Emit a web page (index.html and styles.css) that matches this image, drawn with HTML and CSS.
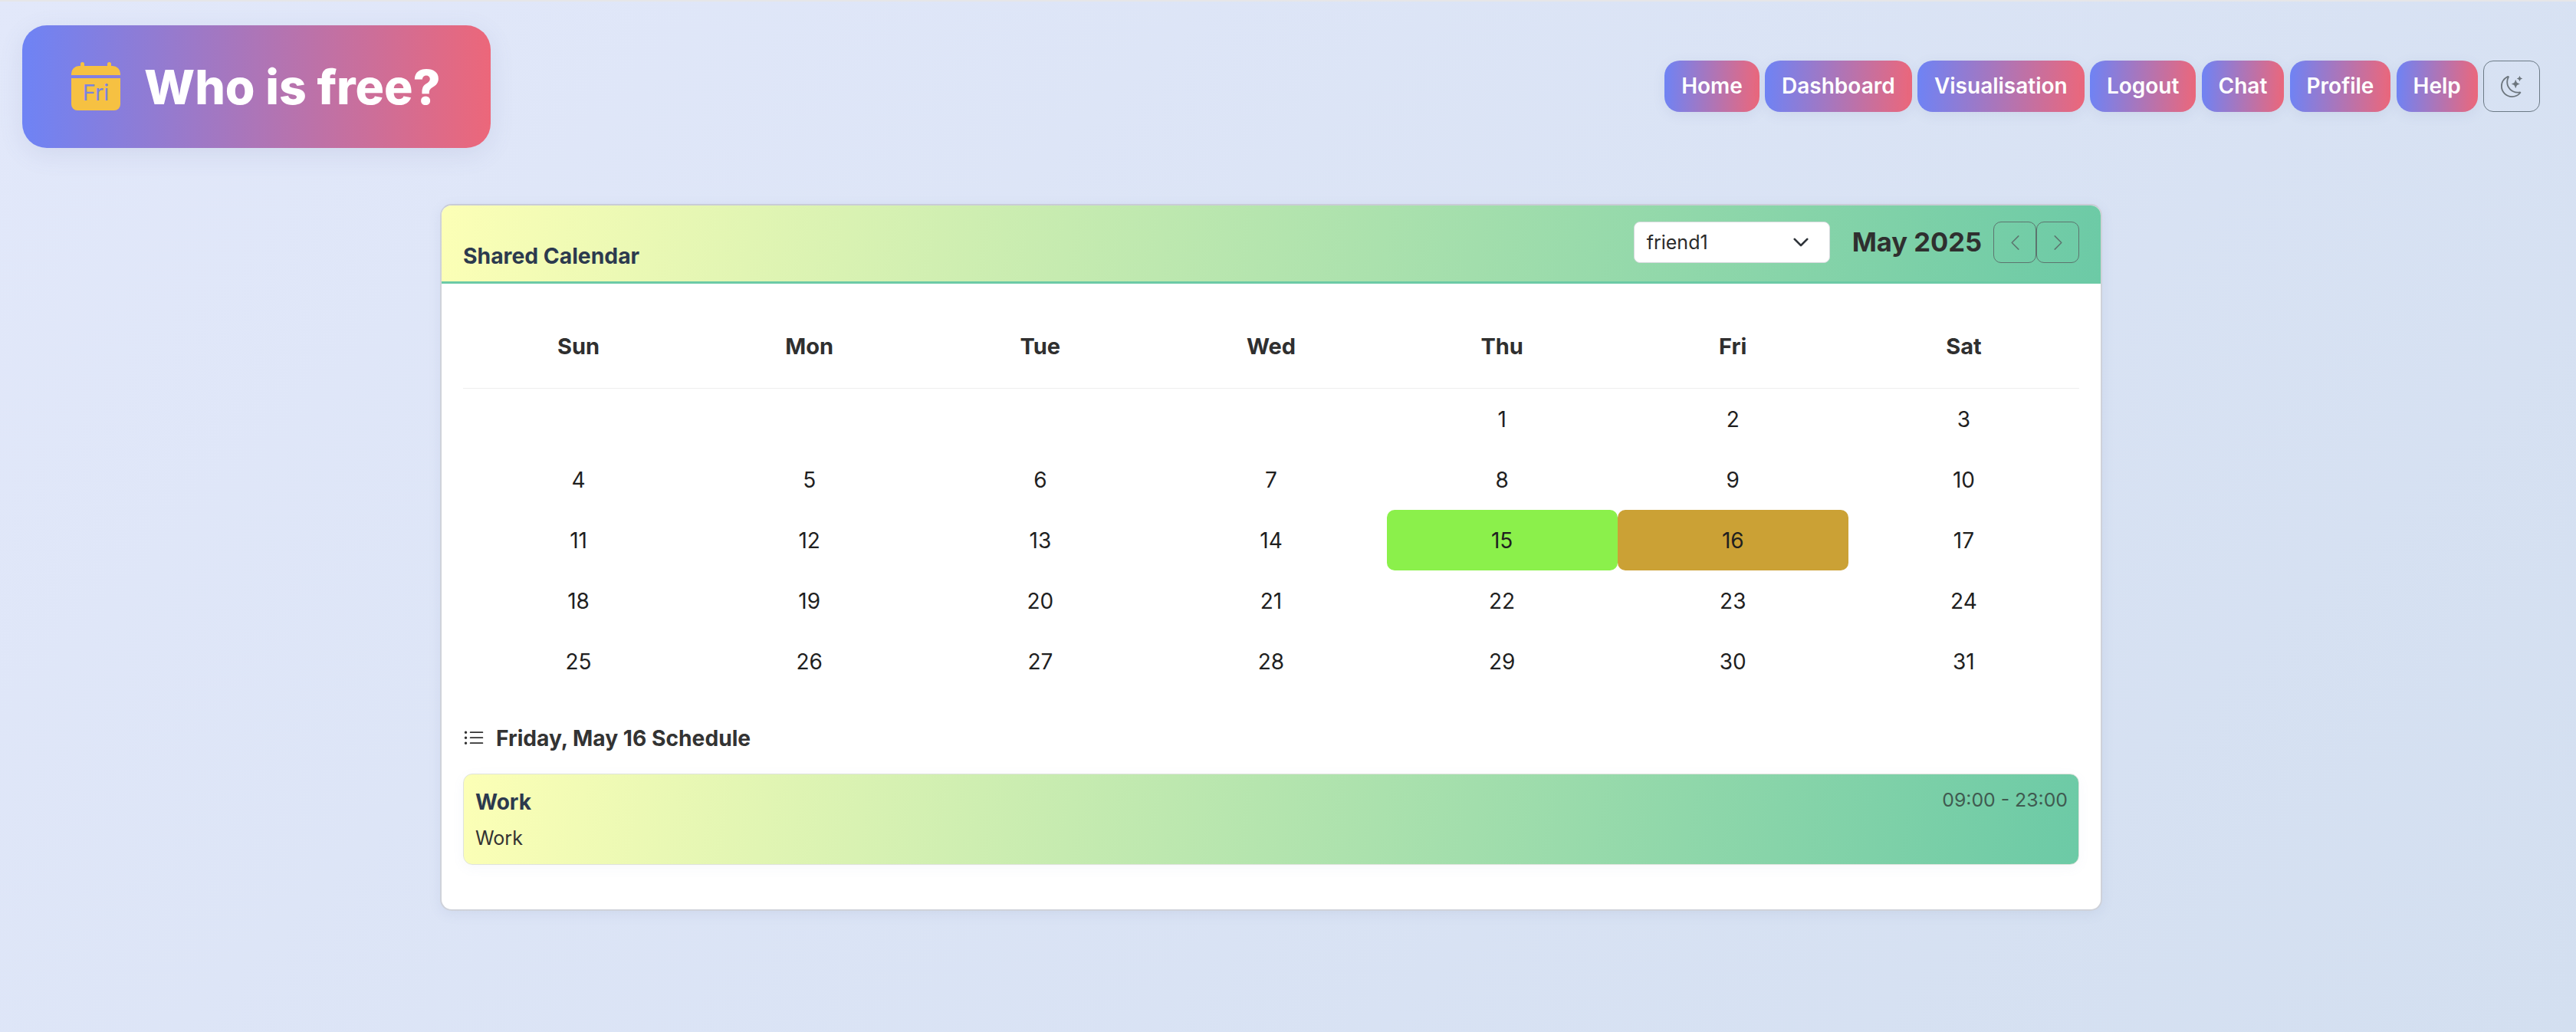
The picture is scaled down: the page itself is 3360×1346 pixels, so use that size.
FILE: index.html
```html
<!DOCTYPE html>
<html lang="en">
<head>
<meta charset="utf-8">
<title>Who is free?</title>
<link rel="stylesheet" href="styles.css">
</head>
<body>
<header class="topbar">
  <div class="logo">
    <svg class="logo-icon" viewBox="0 0 64 64" aria-hidden="true">
      <path class="cal" d="M12 5V2.500a2.500 2.500 0 0 1 5 0V5H47V2.500a2.500 2.500 0 0 1 5 0V5H54a10 10 0 0 1 10 10V17H0V15A10 10 0 0 1 10 5Z"/>
      <path class="cal" d="M0 21H64V55a8 8 0 0 1-8 8H8a8 8 0 0 1-8-8Z"/>
      <text class="cal-text" x="32" y="50" text-anchor="middle">Fri</text>
    </svg>
    <span class="logo-text">Who is free?</span>
  </div>
  <nav class="nav">
    <a class="nav-btn">Home</a>
    <a class="nav-btn">Dashboard</a>
    <a class="nav-btn">Visualisation</a>
    <a class="nav-btn">Logout</a>
    <a class="nav-btn">Chat</a>
    <a class="nav-btn">Profile</a>
    <a class="nav-btn">Help</a>
    <button class="theme-btn" aria-label="Toggle theme">
      <svg class="moon" viewBox="0 0 16 16" aria-hidden="true">
        <path d="M6 .278a.77.77 0 0 1 .08.858 7.2 7.2 0 0 0-.878 3.46c0 4.021 3.278 7.277 7.318 7.277q.792-.001 1.533-.16a.79.79 0 0 1 .81.316.73.73 0 0 1-.031.893A8.35 8.35 0 0 1 8.344 16C3.734 16 0 12.286 0 7.71 0 4.266 2.114 1.312 5.124.06A.75.75 0 0 1 6 .278M4.858 1.311A7.27 7.27 0 0 0 1.025 7.71c0 4.02 3.279 7.276 7.319 7.276a7.32 7.32 0 0 0 5.205-2.162q-.506.063-1.029.063c-4.61 0-8.343-3.714-8.343-8.29 0-1.167.242-2.278.681-3.286"/>
        <path d="M10.794 3.148a.217.217 0 0 1 .412 0l.387 1.162c.173.518.579.924 1.097 1.097l1.162.387a.217.217 0 0 1 0 .412l-1.162.387a1.73 1.73 0 0 0-1.097 1.097l-.387 1.162a.217.217 0 0 1-.412 0l-.387-1.162A1.73 1.73 0 0 0 9.31 6.593l-1.162-.387a.217.217 0 0 1 0-.412l1.162-.387a1.73 1.73 0 0 0 1.097-1.097zM13.863.099a.145.145 0 0 1 .274 0l.258.774c.115.346.386.617.732.732l.774.258a.145.145 0 0 1 0 .274l-.774.258a1.16 1.16 0 0 0-.732.732l-.258.774a.145.145 0 0 1-.274 0l-.258-.774a1.16 1.16 0 0 0-.732-.732l-.774-.258a.145.145 0 0 1 0-.274l.774-.258c.346-.115.617-.386.732-.732z"/>
      </svg>
    </button>
  </nav>
</header>

<main class="card">
  <div class="card-head">
    <h2 class="card-title">Shared Calendar</h2>
    <div class="card-tools">
      <div class="select">
        <span>friend1</span>
        <svg class="select-chevron" viewBox="0 0 16 16" aria-hidden="true"><path d="M2 5l6 6 6-6"/></svg>
      </div>
      <div class="month">May 2025</div>
      <div class="pager">
        <button class="page-btn" aria-label="Previous month"><svg class="chev" viewBox="0 0 16 16" aria-hidden="true"><path fill-rule="evenodd" d="M11.354 1.646a.5.5 0 0 1 0 .708L5.707 8l5.647 5.646a.5.5 0 0 1-.708.708l-6-6a.5.5 0 0 1 0-.708l6-6a.5.5 0 0 1 .708 0"/></svg></button>
        <button class="page-btn" aria-label="Next month"><svg class="chev" viewBox="0 0 16 16" aria-hidden="true"><path fill-rule="evenodd" d="M4.646 1.646a.5.5 0 0 1 .708 0l6 6a.5.5 0 0 1 0 .708l-6 6a.5.5 0 0 1-.708-.708L10.293 8 4.646 2.354a.5.5 0 0 1 0-.708"/></svg></button>
      </div>
    </div>
  </div>
  <div class="card-body">
    <div class="weekdays">
      <div>Sun</div><div>Mon</div><div>Tue</div><div>Wed</div><div>Thu</div><div>Fri</div><div>Sat</div>
    </div>
    <div class="days">
      <div></div><div></div><div></div><div></div><div>1</div><div>2</div><div>3</div>
      <div>4</div><div>5</div><div>6</div><div>7</div><div>8</div><div>9</div><div>10</div>
      <div>11</div><div>12</div><div>13</div><div>14</div><div class="day-green">15</div><div class="day-gold">16</div><div>17</div>
      <div>18</div><div>19</div><div>20</div><div>21</div><div>22</div><div>23</div><div>24</div>
      <div>25</div><div>26</div><div>27</div><div>28</div><div>29</div><div>30</div><div>31</div>
    </div>
    <h3 class="sched-title">
      <svg class="list-icon" viewBox="0 0 16 16" aria-hidden="true"><path fill-rule="evenodd" d="M5 11.500a.5.5 0 0 1 .5-.5h9a.5.5 0 0 1 0 1h-9a.5.5 0 0 1-.5-.5m0-4a.5.5 0 0 1 .5-.5h9a.5.5 0 0 1 0 1h-9a.5.5 0 0 1-.5-.5m0-4a.5.5 0 0 1 .5-.5h9a.5.5 0 0 1 0 1h-9a.5.5 0 0 1-.5-.5m-3 1a1 1 0 1 0 0-2 1 1 0 0 0 0 2m0 4a1 1 0 1 0 0-2 1 1 0 0 0 0 2m0 4a1 1 0 1 0 0-2 1 1 0 0 0 0 2"/></svg>
      <span>Friday, May 16 Schedule</span>
    </h3>
    <div class="event">
      <div class="event-main">
        <div class="event-name">Work</div>
        <div class="event-desc">Work</div>
      </div>
      <div class="event-time">09:00 - 23:00</div>
    </div>
  </div>
</main>
</body>
</html>
```
FILE: styles.css
```css
* { box-sizing: border-box; }
html, body { margin: 0; height: 100%; }
body {
  height: 1346px;
  overflow: hidden;
  border-top: 2px solid #e6e6e8;
  background: linear-gradient(135deg, #e2e8fa 0%, #d3dff0 100%);
  font-family: Inter, "Liberation Sans", sans-serif;
  color: #2b2b2b;
}
.topbar {
  display: flex;
  justify-content: space-between;
  align-items: flex-start;
  padding: 31px 47px 0 29px;
  height: 264px;
}
.logo {
  width: 611px;
  height: 160px;
  display: flex;
  align-items: center;
  gap: 31px;
  padding-left: 64px;
  border-radius: 32px;
  background: linear-gradient(90deg, #6e83f5 0%, #ec677a 100%);
  box-shadow: 0 8px 32px rgba(100, 110, 160, 0.12);
}
.logo-icon { width: 64px; height: 64px; flex: none; }
.cal { fill: #f6c142; }
.cal-text { font-family: Inter, sans-serif; font-size: 29px; font-weight: 400; fill: #7a83e0; }
.logo-text { font-size: 62.500px; font-weight: 800; color: #fff; white-space: nowrap; }
.nav {
  display: flex;
  gap: 7.200px;
  margin-top: 46px;
}
.nav-btn {
  height: 67px;
  display: flex;
  align-items: center;
  padding: 0 22px 2px;
  border-radius: 20px;
  color: #fff;
  font-size: 28px;
  font-weight: 600;
  background: linear-gradient(92deg, #6e83f5 0%, #ec677a 100%);
  box-shadow: 0 4px 16px rgba(100, 110, 160, 0.1);
}
.theme-btn {
  width: 74px;
  height: 67px;
  padding: 0;
  display: flex;
  align-items: center;
  justify-content: center;
  background: transparent;
  border: 1.500px solid #6c7a86;
  border-radius: 13px;
}
.moon { width: 28px; height: 28px; fill: #6c757d; }
.card {
  width: 2168px;
  margin-left: 574px;
  background: #fff;
  border: 2px solid #cfd2da;
  border-top-color: #c9ccd6;
  border-radius: 15px;
  box-shadow: 0 4px 16px rgba(100, 120, 170, 0.1);
  overflow: hidden;
}
.card-head {
  height: 102px;
  display: flex;
  justify-content: space-between;
  padding: 21px 28px 0 28px;
  border-bottom: 3px solid #6ccaa6;
  background: linear-gradient(100deg, #fcffb6 0%, #6ccaa6 100%);
}
.card-title {
  margin: 0;
  padding-top: 28px;
  font-size: 28.300px;
  font-weight: 700;
  line-height: 34px;
  color: #2c3a4e;
}
.card-tools { display: flex; align-items: flex-start; }
.select {
  width: 256px;
  height: 54px;
  display: flex;
  align-items: center;
  justify-content: space-between;
  padding: 0 26px 0 16px;
  background: #fff;
  border: 1px solid #d6dadd;
  border-radius: 8px;
  font-size: 25px;
  color: #2b2b2b;
}
.select-chevron { width: 22px; height: 22px; fill: none; stroke: #2f343a; stroke-width: 2; stroke-linecap: round; stroke-linejoin: round; }
.month {
  margin-left: 29px;
  font-size: 34.500px;
  font-weight: 700;
  line-height: 54px;
  color: #2f2f2f;
  white-space: nowrap;
}
.pager { display: flex; margin-left: 15px; }
.page-btn {
  width: 56px;
  height: 54px;
  padding: 0;
  display: flex;
  align-items: center;
  justify-content: center;
  background: transparent;
  border: 1.500px solid #5c746e;
  border-radius: 10px;
}
.chev { width: 23px; height: 23px; fill: #5c746e; }
.card-body { padding: 0 28px 58px 28px; }
.weekdays {
  display: grid;
  grid-template-columns: repeat(7, 1fr);
  height: 137px;
  align-items: center;
  padding-top: 27px;
  border-bottom: 1.500px solid #eeeeee;
  font-size: 29px;
  font-weight: 700;
  text-align: center;
  color: #2f2f2f;
}
.days {
  display: grid;
  grid-template-columns: repeat(7, 1fr);
  grid-auto-rows: 79px;
  font-size: 28px;
  color: #1f1f1f;
}
.days > div {
  display: flex;
  align-items: center;
  justify-content: center;
}
.days .day-green { background: #8bf04b; border-radius: 10px; }
.days .day-gold { background: #cba135; border-radius: 10px; }
.sched-title {
  display: flex;
  align-items: center;
  gap: 15px;
  margin: 41px 0 0;
  height: 40px;
  font-size: 28.200px;
  font-weight: 700;
  color: #333;
}
.list-icon { width: 28px; height: 28px; fill: #333; flex: none; }
.event {
  display: flex;
  justify-content: space-between;
  align-items: flex-start;
  height: 119px;
  margin-top: 26px;
  padding: 17px 14px 0 15px;
  border: 1.500px solid #dfe3dc;
  border-radius: 12px;
  background: linear-gradient(100deg, #fcffb6 0%, #6ccaa6 100%);
  box-shadow: 0 4px 16px rgba(120, 140, 180, 0.06);
}
.event-name { font-size: 28px; font-weight: 700; color: #2c3a4e; line-height: 38px; }
.event-desc { font-size: 25px; color: #333; margin-top: 11px; line-height: 34px; }
.event-time { font-size: 24.800px; color: #3f5a50; line-height: 32px; }
```
